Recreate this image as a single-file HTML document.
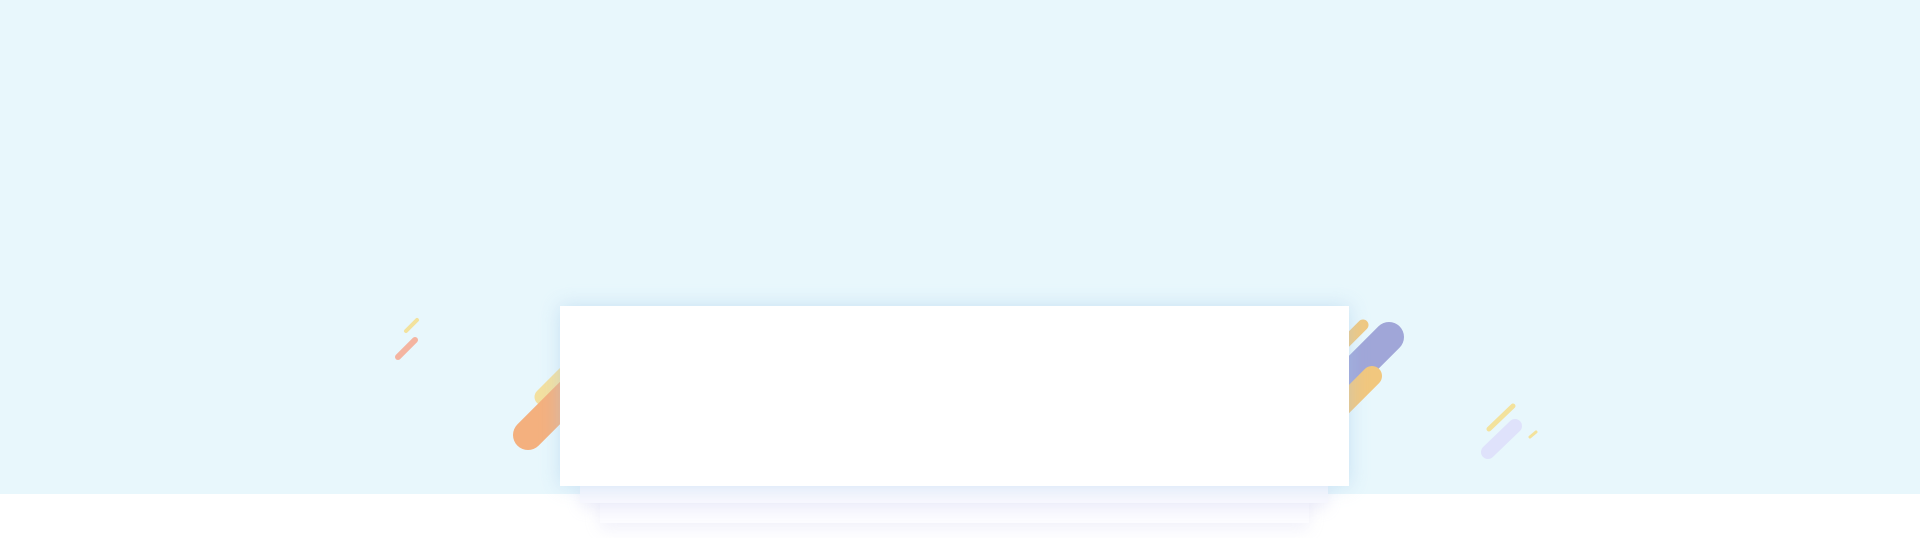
<!DOCTYPE html>
<html><head><meta charset="utf-8"><style>
html,body{margin:0;padding:0;width:1920px;height:538px;overflow:hidden;background:#fff}
.bg{position:absolute;left:0;top:0;width:1920px;height:494px;background:#e8f7fc}
.l3{position:absolute;left:600px;top:490px;width:709px;height:33px;background:#fcfcff;box-shadow:0 6px 16px rgba(180,180,230,.18)}
.l2{position:absolute;left:580px;top:480px;width:748px;height:23px;background:#f8f8fe;box-shadow:0 6px 14px rgba(180,180,230,.2)}
.card{position:absolute;left:560px;top:306px;width:789px;height:180px;background:#fff;box-shadow:0 0 18px rgba(160,200,235,.45)}
svg{position:absolute;left:0;top:0}
</style></head><body>
<div class="bg"></div>
<svg width="1920" height="538" stroke-linecap="round">
<line x1="406" y1="331" x2="417" y2="320" stroke="#f3e29c" stroke-width="4"/>
<line x1="398" y1="357" x2="415" y2="340" stroke="#f4b4a0" stroke-width="6"/>
<line x1="543" y1="397" x2="575" y2="365" stroke="#f3e0a0" stroke-width="17"/>
<line x1="528" y1="435" x2="575" y2="388" stroke="#f4b07e" stroke-width="30"/>
<line x1="1363" y1="325" x2="1335" y2="353" stroke="#f0c880" stroke-width="11"/>
<line x1="1389" y1="337" x2="1335" y2="391" stroke="#a0a6d8" stroke-width="30"/>
<line x1="1372" y1="376" x2="1335" y2="413" stroke="#f1c77e" stroke-width="20"/>
<line x1="1513" y1="406" x2="1489" y2="429" stroke="#f3e29c" stroke-width="5"/>
<line x1="1515" y1="426" x2="1488" y2="452" stroke="#dfe2fb" stroke-width="14"/>
<line x1="1536" y1="432" x2="1530" y2="437" stroke="#f3e29c" stroke-width="3"/>
</svg>
<div class="l3"></div>
<div class="l2"></div>
<div class="card"></div>
</body></html>
